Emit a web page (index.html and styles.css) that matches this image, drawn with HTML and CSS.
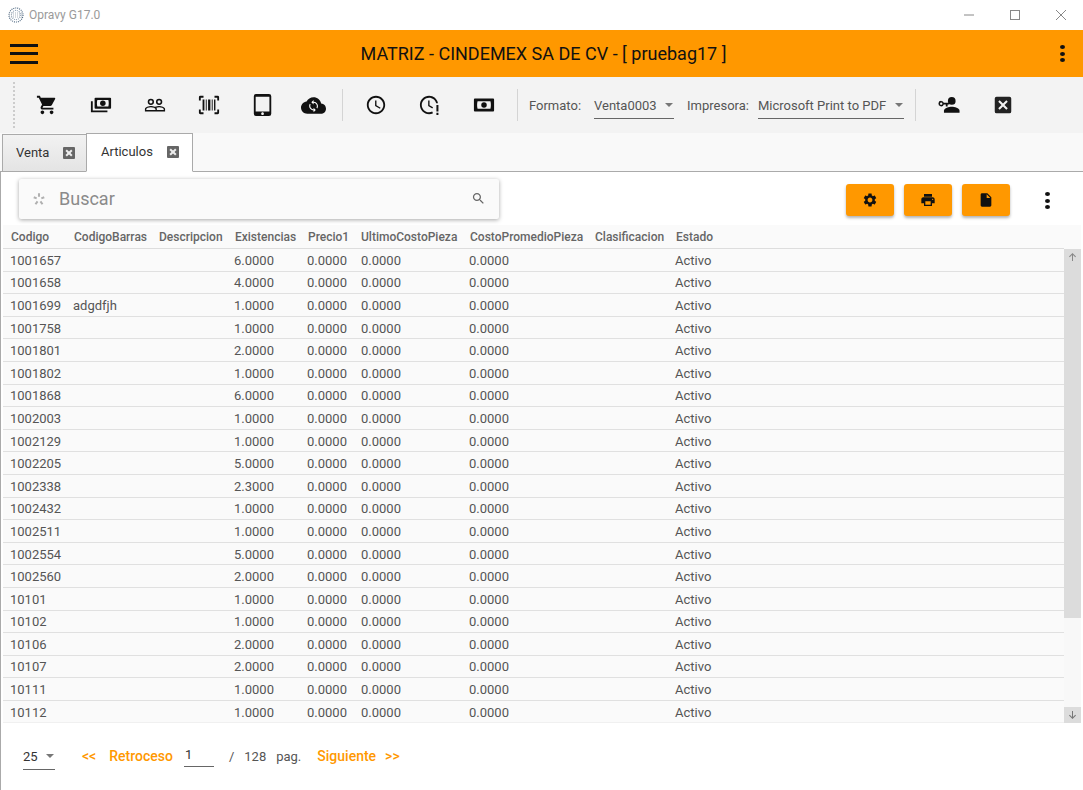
FILE: index.html
```html
<!DOCTYPE html>
<html lang="es">
<head>
<meta charset="utf-8">
<title>Opravy G17.0</title>
<link rel="stylesheet" href="styles.css">
</head>
<body>
<div class="app">
  <div class="titlebar">
    <svg class="logo" viewBox="0 0 16 16"><g fill="none" stroke-width="1.1" stroke-dasharray="1 1"><circle cx="8" cy="8" r="7" stroke="#445f7a"/><circle cx="8" cy="8" r="4.6" stroke="#8fa1b3"/><path d="M1 6h14M1 8h14M1 10h14" stroke="#aab4be"/></g></svg>
    <span class="app-name">Opravy G17.0</span>
    <div class="win-btns">
      <svg class="win" viewBox="0 0 12 12"><path d="M1 6h10" stroke="#888" fill="none"/></svg>
      <svg class="win" viewBox="0 0 12 12"><rect x="1.5" y="1.5" width="9" height="9" stroke="#888" fill="none"/></svg>
      <svg class="win" viewBox="0 0 12 12"><path d="M1 1l10 10M11 1L1 11" stroke="#888" fill="none"/></svg>
    </div>
  </div>

  <header class="appbar">
    <div class="burger"><i></i><i></i><i></i></div>
    <h1 class="appbar-title">MATRIZ - CINDEMEX SA DE CV - [ pruebag17 ]</h1>
    <div class="kebab"><i></i><i></i><i></i></div>
  </header>

  <div class="toolbar">
    <div class="grip"></div>
    <button class="tool"><svg class="ic" viewBox="0 0 24 24"><path d="M7 18c-1.1 0-1.99.9-1.99 2S5.9 22 7 22s2-.9 2-2-.9-2-2-2zM1 2v2h2l3.6 7.59-1.35 2.45c-.16.28-.25.61-.25.96 0 1.1.9 2 2 2h12v-2H7.42c-.14 0-.25-.11-.25-.25l.03-.12.9-1.63h7.45c.75 0 1.41-.41 1.75-1.03l3.58-6.49c.08-.14.12-.31.12-.48 0-.55-.45-1-1-1H5.21l-.94-2H1zm16 16c-1.1 0-1.99.9-1.99 2s.89 2 1.99 2 2-.9 2-2-.9-2-2-2z"/></svg></button>
    <button class="tool"><svg class="ic" viewBox="0 0 24 24"><path fill-rule="evenodd" d="M6 4h16a1 1 0 0 1 1 1v10a1 1 0 0 1-1 1H6a1 1 0 0 1-1-1V5a1 1 0 0 1 1-1zm2 2.500c-.6 1.500-.6 5.500 0 7h12c.6-1.500.6-5.500 0-7z"/><circle cx="14" cy="10" r="3"/><path d="M1 8h2v10h16v2H1z"/></svg></button>
    <button class="tool"><svg class="ic" viewBox="0 0 24 24"><path d="M16.500 13c-1.200 0-3.070.34-4.500 1-1.430-.67-3.300-1-4.500-1C5.330 13 1 14.080 1 16.250V19h22v-2.750c0-2.170-4.330-3.250-6.500-3.250zm-4 4.500h-10v-1.250c0-.54 2.560-1.750 5-1.750s5 1.210 5 1.750v1.250zm9 0H14v-1.250c0-.46-.2-.86-.52-1.220.88-.3 1.960-.53 3.020-.53 2.440 0 5 1.210 5 1.750v1.250z"/><g fill="none" stroke="#111" stroke-width="1.700"><circle cx="7.500" cy="8.500" r="2.600"/><circle cx="16.500" cy="8.500" r="2.600"/></g></svg></button>
    <button class="tool"><svg class="ic" viewBox="0 0 24 24"><path d="M1 7V3.500A1.500 1.500 0 0 1 2.500 2H6v2H3v3zM18 2h3.500A1.500 1.500 0 0 1 23 3.500V7h-2V4h-3zM1 17h2v3h3v2H2.500A1.500 1.500 0 0 1 1 20.500zM21 17h2v3.500a1.500 1.500 0 0 1-1.500 1.500H18v-2h3zM5 6h2v12H5zM8.500 6h1v12h-1zM11 6h2.500v12H11zM15 6h1v12h-1zM17.500 6h1.500v12h-1.500z"/></svg></button>
    <button class="tool"><svg class="ic" viewBox="0 0 24 24"><path d="M18.500 0h-14A2.500 2.500 0 0 0 2 2.500v19A2.500 2.500 0 0 0 4.500 24h14a2.500 2.500 0 0 0 2.500-2.500v-19A2.500 2.500 0 0 0 18.500 0zm-7 23c-.83 0-1.500-.67-1.500-1.500s.67-1.500 1.500-1.500 1.500.67 1.500 1.500-.67 1.500-1.500 1.500zm7.500-4H4V3h15v16z"/></svg></button>
    <button class="tool tool-cloud"><svg class="ic ic-wide" viewBox="0 0 24 24"><path d="M19.350 10.040C18.670 6.590 15.640 4 12 4 9.110 4 6.600 5.640 5.350 8.040 2.340 8.360 0 10.910 0 14c0 3.310 2.690 6 6 6h13c2.760 0 5-2.240 5-5 0-2.640-2.050-4.780-4.650-4.960z"/><path fill="#fff" transform="translate(5.700 6.200) scale(.53)" d="M12 4V1L8 5l4 4V6c3.310 0 6 2.690 6 6 0 1.010-.25 1.970-.7 2.800l1.460 1.460C19.540 15.030 20 13.570 20 12c0-4.420-3.580-8-8-8zm0 14c-3.310 0-6-2.690-6-6 0-1.010.25-1.970.7-2.800L5.240 7.740C4.460 8.970 4 10.430 4 12c0 4.420 3.580 8 8 8v3l4-4-4-4v3z"/></svg></button>
    <span class="sep sep-a"></span>
    <button class="tool"><svg class="ic" viewBox="0 0 24 24"><path d="M11.990 2C6.470 2 2 6.480 2 12s4.470 10 9.990 10C17.520 22 22 17.520 22 12S17.520 2 11.990 2zM12 20c-4.420 0-8-3.580-8-8s3.580-8 8-8 8 3.580 8 8-3.580 8-8 8zm.5-13H11v6l5.250 3.150.75-1.230-4.500-2.670z"/></svg></button>
    <button class="tool"><svg class="ic" viewBox="0 0 24 24"><path d="M11 2C5.500 2 1 6.500 1 12s4.500 10 10 10c1.500 0 3-.3 4.300-1l-.9-1.800c-1 .5-2.200.8-3.400.8-4.400 0-8-3.600-8-8s3.600-8 8-8c3.700 0 6.800 2.500 7.700 6h2C19.800 5.500 15.800 2 11 2zM11.500 7H10v6l4.500 2.800.8-1.300-3.800-2.300zM19 12h2.200v7H19zM19 20.500h2.200V23H19z"/></svg></button>
    <button class="tool"><svg class="ic" viewBox="0 0 24 24"><path fill-rule="evenodd" d="M2 5h20a1 1 0 0 1 1 1v12a1 1 0 0 1-1 1H2a1 1 0 0 1-1-1V6a1 1 0 0 1 1-1zm3 3c-.7 2-.7 6 0 8h14c.7-2 .7-6 0-8z"/><circle cx="12" cy="12" r="3"/></svg></button>
    <span class="sep sep-b"></span>
    <span class="field-label">Formato:</span>
    <div class="picker picker-format"><span>Venta0003</span><i class="caret"></i></div>
    <span class="field-label">Impresora:</span>
    <div class="picker picker-printer"><span>Microsoft Print to PDF</span><i class="caret"></i></div>
    <span class="sep sep-c"></span>
    <button class="tool"><svg class="ic" viewBox="0 0 24 24"><circle cx="15" cy="7.500" r="4.200"/><path d="M6.500 20.500v-2.200c0-2.900 5.600-4.300 8.500-4.300s8.500 1.400 8.500 4.300v2.200z"/><path fill-rule="evenodd" d="M3.500 7.500A3 3 0 0 1 6.300 9.500H12v2h-1.500V13.500H8.500v-2H6.300a3 3 0 1 1-2.800-4zm0 1.700a1.300 1.300 0 1 0 0 2.600 1.300 1.300 0 0 0 0-2.600z"/></svg></button>
    <button class="tool"><svg class="ic" viewBox="0 0 24 24"><path fill-rule="evenodd" d="M5 3h14a2 2 0 0 1 2 2v14a2 2 0 0 1-2 2H5a2 2 0 0 1-2-2V5a2 2 0 0 1 2-2zm3.400 3.800L6.800 8.400 10.400 12l-3.600 3.600 1.600 1.600L12 13.600l3.600 3.600 1.600-1.600-3.600-3.600 3.600-3.600-1.600-1.600L12 10.400z" fill="#222"/></svg></button>
  </div>

  <nav class="tabs">
    <div class="tab tab-off"><span>Venta</span><i class="tab-x"></i></div>
    <div class="tab tab-on"><span>Articulos</span><i class="tab-x"></i></div>
  </nav>

  <main class="content">
    <div class="actions">
      <div class="search">
        <svg class="yelp" viewBox="0 0 24 24"><path d="M12 2v6M3 9l5 2M21 9l-5 2M6 21l3.500-5M18 21l-3.500-5"/></svg>
        <span class="search-text">Buscar</span>
        <svg class="search-ic" viewBox="0 0 24 24"><path d="M15.500 14h-.79l-.28-.27C15.410 12.590 16 11.110 16 9.500 16 5.910 13.090 3 9.500 3S3 5.910 3 9.500 5.910 16 9.500 16c1.610 0 3.090-.59 4.230-1.570l.27.28v.79l5 4.990L20.490 19l-4.990-5zm-6 0C7.010 14 5 11.990 5 9.500S7.010 5 9.500 5 14 7.010 14 9.500 11.990 14 9.500 14z"/></svg>
      </div>
      <button class="fab"><svg class="fab-ic" viewBox="0 0 24 24"><path d="M19.140 12.940c.04-.3.06-.61.06-.94 0-.32-.02-.64-.07-.94l2.030-1.580c.18-.14.23-.41.12-.61l-1.920-3.320c-.12-.22-.37-.29-.59-.22l-2.390.96c-.5-.38-1.030-.7-1.620-.94L14.400 2.810c-.04-.24-.24-.41-.48-.41h-3.840c-.24 0-.43.17-.47.41L9.250 5.350c-.59.24-1.130.57-1.620.94l-2.390-.96c-.22-.08-.47 0-.59.22L2.740 8.870c-.12.21-.08.47.12.61l2.030 1.580c-.05.3-.09.63-.09.94s.02.64.07.94l-2.030 1.580c-.18.14-.23.41-.12.61l1.920 3.320c.12.22.37.29.59.22l2.390-.96c.5.38 1.030.7 1.620.94l.36 2.540c.05.24.24.41.48.41h3.840c.24 0 .44-.17.47-.41l.36-2.540c.59-.24 1.130-.56 1.620-.94l2.390.96c.22.08.47 0 .59-.22l1.920-3.320c.12-.22.07-.47-.12-.61l-2.010-1.580zM12 15.600c-1.980 0-3.600-1.620-3.600-3.600s1.620-3.600 3.600-3.600 3.600 1.620 3.600 3.600-1.620 3.600-3.600 3.600z"/></svg></button>
      <button class="fab"><svg class="fab-ic" viewBox="0 0 24 24"><path d="M19 8H5c-1.660 0-3 1.340-3 3v6h4v4h12v-4h4v-6c0-1.660-1.340-3-3-3zm-3 11H8v-5h8v5zm3-7c-.55 0-1-.45-1-1s.45-1 1-1 1 .45 1 1-.45 1-1 1zm-1-9H6v4h12V3z"/></svg></button>
      <button class="fab"><svg class="fab-ic" viewBox="0 0 24 24"><path d="M14 2H6c-1.100 0-1.990.9-1.990 2L4 20c0 1.100.89 2 1.990 2H18c1.100 0 2-.9 2-2V8l-6-6zm-1 7V3.500L18.500 9H13z"/></svg></button>
      <div class="kebab kebab-page"><i></i><i></i><i></i></div>
    </div>

    <div class="grid">
      <div class="grid-head">
        <span>Codigo</span><span>CodigoBarras</span><span>Descripcion</span><span>Existencias</span><span>Precio1</span><span>UltimoCostoPieza</span><span>CostoPromedioPieza</span><span>Clasificacion</span><span>Estado</span>
      </div>
      <div class="grid-main">
        <div class="rows">
          <div class="row"><span>1001657</span><span></span><span></span><span>6.0000</span><span>0.0000</span><span>0.0000</span><span>0.0000</span><span></span><span>Activo</span></div>
          <div class="row"><span>1001658</span><span></span><span></span><span>4.0000</span><span>0.0000</span><span>0.0000</span><span>0.0000</span><span></span><span>Activo</span></div>
          <div class="row"><span>1001699</span><span>adgdfjh</span><span></span><span>1.0000</span><span>0.0000</span><span>0.0000</span><span>0.0000</span><span></span><span>Activo</span></div>
          <div class="row"><span>1001758</span><span></span><span></span><span>1.0000</span><span>0.0000</span><span>0.0000</span><span>0.0000</span><span></span><span>Activo</span></div>
          <div class="row"><span>1001801</span><span></span><span></span><span>2.0000</span><span>0.0000</span><span>0.0000</span><span>0.0000</span><span></span><span>Activo</span></div>
          <div class="row"><span>1001802</span><span></span><span></span><span>1.0000</span><span>0.0000</span><span>0.0000</span><span>0.0000</span><span></span><span>Activo</span></div>
          <div class="row"><span>1001868</span><span></span><span></span><span>6.0000</span><span>0.0000</span><span>0.0000</span><span>0.0000</span><span></span><span>Activo</span></div>
          <div class="row"><span>1002003</span><span></span><span></span><span>1.0000</span><span>0.0000</span><span>0.0000</span><span>0.0000</span><span></span><span>Activo</span></div>
          <div class="row"><span>1002129</span><span></span><span></span><span>1.0000</span><span>0.0000</span><span>0.0000</span><span>0.0000</span><span></span><span>Activo</span></div>
          <div class="row"><span>1002205</span><span></span><span></span><span>5.0000</span><span>0.0000</span><span>0.0000</span><span>0.0000</span><span></span><span>Activo</span></div>
          <div class="row"><span>1002338</span><span></span><span></span><span>2.3000</span><span>0.0000</span><span>0.0000</span><span>0.0000</span><span></span><span>Activo</span></div>
          <div class="row"><span>1002432</span><span></span><span></span><span>1.0000</span><span>0.0000</span><span>0.0000</span><span>0.0000</span><span></span><span>Activo</span></div>
          <div class="row"><span>1002511</span><span></span><span></span><span>1.0000</span><span>0.0000</span><span>0.0000</span><span>0.0000</span><span></span><span>Activo</span></div>
          <div class="row"><span>1002554</span><span></span><span></span><span>5.0000</span><span>0.0000</span><span>0.0000</span><span>0.0000</span><span></span><span>Activo</span></div>
          <div class="row"><span>1002560</span><span></span><span></span><span>2.0000</span><span>0.0000</span><span>0.0000</span><span>0.0000</span><span></span><span>Activo</span></div>
          <div class="row"><span>10101</span><span></span><span></span><span>1.0000</span><span>0.0000</span><span>0.0000</span><span>0.0000</span><span></span><span>Activo</span></div>
          <div class="row"><span>10102</span><span></span><span></span><span>1.0000</span><span>0.0000</span><span>0.0000</span><span>0.0000</span><span></span><span>Activo</span></div>
          <div class="row"><span>10106</span><span></span><span></span><span>2.0000</span><span>0.0000</span><span>0.0000</span><span>0.0000</span><span></span><span>Activo</span></div>
          <div class="row"><span>10107</span><span></span><span></span><span>2.0000</span><span>0.0000</span><span>0.0000</span><span>0.0000</span><span></span><span>Activo</span></div>
          <div class="row"><span>10111</span><span></span><span></span><span>1.0000</span><span>0.0000</span><span>0.0000</span><span>0.0000</span><span></span><span>Activo</span></div>
          <div class="row"><span>10112</span><span></span><span></span><span>1.0000</span><span>0.0000</span><span>0.0000</span><span>0.0000</span><span></span><span>Activo</span></div>
        </div>
        <div class="scrollbar">
          <svg class="arrow" viewBox="0 0 24 24"><path d="M12 4l-7 7 1.500 1.500L11 8v12h2V8l4.500 4.500L19 11z"/></svg>
          <div class="thumb"></div>
          <div class="track"></div>
          <svg class="arrow arrow-down" viewBox="0 0 24 24"><path d="M12 20l-7-7 1.500-1.500L11 16V4h2v12l4.500-4.500L19 13z"/></svg>
        </div>
      </div>
    </div>

    <footer class="pager">
      <div class="picker picker-size"><span>25</span><i class="caret"></i></div>
      <span class="pg-link pg-back">&lt;&lt;</span>
      <span class="pg-link pg-ret">Retroceso</span>
      <span class="pg-input">1</span>
      <span class="pg-text pg-slash">/</span>
      <span class="pg-text pg-total">128</span>
      <span class="pg-text pg-word">pag.</span>
      <span class="pg-link pg-next">Siguiente</span>
      <span class="pg-link pg-fwd">&gt;&gt;</span>
    </footer>
  </main>
</div>
</body>
</html>
```
FILE: styles.css
```css
* { box-sizing: border-box; }
html, body { margin: 0; padding: 0; height: 100%; overflow: hidden; background: #fff; }
body { font-family: Roboto, "Liberation Sans", sans-serif; color: #333; }
button { border: 0; padding: 0; background: none; font: inherit; }

.app { display: flex; flex-direction: column; height: 790px; width: 1083px; }

/* title bar */
.titlebar { display: flex; align-items: center; height: 30px; flex: none; padding-left: 8px; background: #fff; }
.logo { width: 16px; height: 16px; }
.app-name { margin-left: 5px; font-size: 12px; color: #9a9a9a; }
.win-btns { margin-left: auto; display: flex; gap: 34px; padding-right: 16px; }
.win { width: 12px; height: 12px; display: block; }

/* app bar */
.appbar { display: flex; align-items: center; height: 47px; flex: none; background: #ff9800; padding: 0 18px 0 10px; }
.burger { display: flex; flex-direction: column; gap: 5.5px; width: 28px; }
.burger i { display: block; height: 3px; background: #111; }
.appbar-title { flex: 1; margin: 0; text-align: center; font-size: 18px; font-weight: 400; color: #111; padding-right: 11px; }
.kebab { display: flex; flex-direction: column; gap: 2.500px; width: 5px; }
.kebab i { display: block; width: 5px; height: 4px; border-radius: 50%; background: #111; }

/* toolbar */
.toolbar { display: flex; align-items: center; height: 56px; flex: none; background: #f3f3f3; padding-left: 13px; }
.grip { width: 0; height: 46px; border-left: 2px dotted #ccc; margin-right: 5px; }
.tool { width: 54px; height: 40px; display: flex; align-items: center; justify-content: center; flex: none; }
.tool-cloud { margin-left: -4px; }
.ic { width: 22px; height: 22px; fill: #111; display: block; }
.ic-wide { width: 25px; height: 25px; }
.sep { width: 1px; height: 32px; background: #d4d4d4; flex: none; }
.sep-a { margin: 0 6px 0 2px; }
.sep-b { margin: 0 11px 0 6px; }
.sep-c { margin: 0 6px 0 11px; }
.field-label { font-size: 13px; color: #555; flex: none; }
.picker { display: flex; align-items: center; justify-content: space-between; height: 28px; border-bottom: 1px solid #666; font-size: 13px; color: #555; flex: none; margin-top: 0; }
.picker-format { width: 80px; margin: 0 13px; padding-top: 1px; }
.picker-printer { width: 146px; margin-left: 9px; padding-top: 1px; }
.caret { width: 0; height: 0; border-left: 4px solid transparent; border-right: 4px solid transparent; border-top: 4px solid #777; margin-right: 1px; }

/* tabs */
.tabs { display: flex; align-items: flex-end; height: 39px; flex: none; background: #f9f9f9; padding-left: 2px; border-bottom: 1px solid #aaa; }
.tab { display: flex; align-items: center; border: 1px solid #aaa; font-size: 13px; color: #333; }
.tab-off { width: 84px; height: 37px; padding: 0 0 1px 13px; background: linear-gradient(#f2f2f2, #e4e4e4); border-bottom: 0; border-right: 0; }
.tab-off .tab-x { margin-left: 14px; }
.tab-on { width: 107px; height: 39px; padding: 0 0 2px 14px; background: #fff; border-bottom-color: #fff; margin-bottom: -1px; }
.tab-on .tab-x { margin-left: 14px; }
.tab-x { position: relative; display: block; width: 12px; height: 12px; border-radius: 1px; background: #666; }
.tab-x::before, .tab-x::after { content: ""; position: absolute; left: 2px; top: 5px; width: 8px; height: 2px; background: #eee; transform: rotate(45deg); }
.tab-x::after { transform: rotate(-45deg); }

/* content */
.content { flex: 1; display: flex; flex-direction: column; min-height: 0; border-left: 1px solid #aaa; background: #fff; }
.actions { display: flex; align-items: flex-start; height: 53px; flex: none; padding-left: 18px; }
.search { display: flex; align-items: center; width: 480px; height: 40px; margin-top: 7px; padding: 0 13px 1px; background: #fafafa; border-radius: 2px; box-shadow: 0 1px 4px rgba(0,0,0,.35); }
.yelp { width: 14px; height: 14px; fill: none; stroke: #b0b0b0; stroke-width: 3.5; flex: none; }
.search-text { margin-left: 13px; font-size: 18px; color: #8a8a8a; }
.search-ic { margin-left: auto; width: 15px; height: 15px; fill: #666; }
.fab { display: flex; align-items: center; justify-content: center; width: 48px; height: 32px; margin: 12px 10px 0 0; background: #ff9800; border-radius: 3px; box-shadow: 0 2px 3px rgba(0,0,0,.3); flex: none; }
.search + .fab { margin-left: 347px; }
.fab-ic { width: 16px; height: 16px; fill: #111; }
.kebab-page { margin: 20px 0 0 25px; }

/* data grid */
.grid { margin-left: 2px; width: 1078px; display: flex; flex-direction: column; flex: none; background: #fafafa; font-size: 13px; }
.grid-head, .row { display: grid; grid-template-columns: 63px 85px 76px 73px 54px 108px 125px 81px 1fr; }
.grid-head { height: 24px; align-items: center; font-size: 12px; font-weight: 500; color: #666; padding-top: 1px; margin-right: 17px; border-bottom: 1px solid #ddd; }
.grid-head span { padding-left: 8px; white-space: nowrap; }
.grid-head span:nth-child(6) { padding-left: 7px; }
.grid-main { display: flex; height: 474px; }
.rows { width: 1061px; flex: none; }
.row { height: 22.600px; padding-top: 1px; align-items: center; border-bottom: 1px solid #e0e0e0; color: #555; }
.row:last-child { border-bottom-color: #f0f0f0; }
.row span { padding-left: 7px; white-space: nowrap; }
.scrollbar { width: 17px; display: flex; flex-direction: column; background: #f8f8f8; }
.arrow { width: 17px; height: 16px; padding: 2px; flex: none; fill: #888; background: #dcdcdc; }
.arrow-down { fill: #777; }
.thumb { height: 353px; background: #dcdcdc; flex: none; }
.track { flex: 1; }

/* pager */
.pager { display: flex; align-items: center; height: 66px; flex: none; padding: 0 0 0 22px; font-size: 13px; }
.picker-size { width: 32px; height: 26px; color: #333; margin-top: 1px; }
.pg-link { color: #ff9800; font-weight: 500; font-size: 14px; flex: none; }
.pg-back { margin-left: 27px; }
.pg-ret { margin-left: 13px; }
.pg-input { width: 30px; height: 22px; line-height: 19px; margin-left: 11px; padding-left: 1px; border-bottom: 1px solid #666; color: #333; }
.pg-text { color: #555; flex: none; }
.pg-slash { margin-left: 15px; }
.pg-total { margin-left: 10px; }
.pg-word { margin-left: 10px; }
.pg-next { margin-left: 16px; }
.pg-fwd { margin-left: 9px; }
```
